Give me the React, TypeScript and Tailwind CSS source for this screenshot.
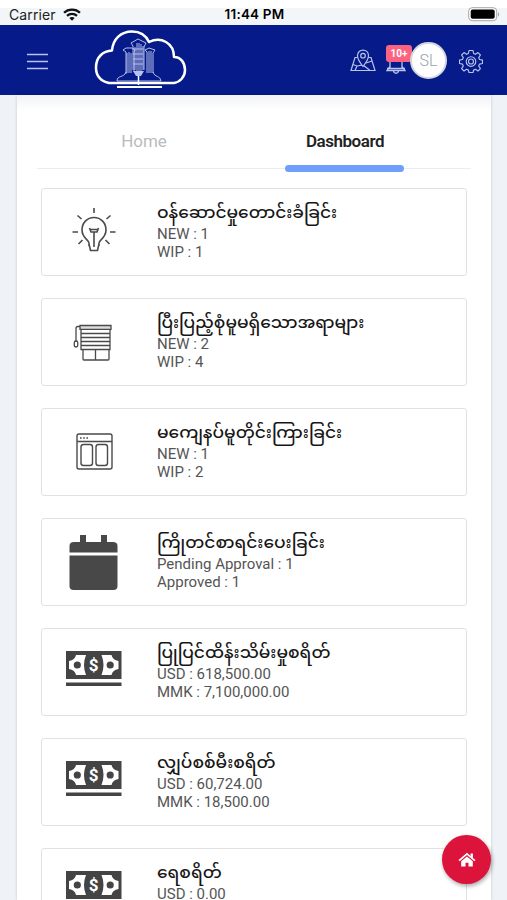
import type { ReactNode } from "react";

type CardItem = {
    title: string;
    // final width of the title
    width: string;
    lines: string[];
    icon: ReactNode;
};

const cards: CardItem[] = [
    { title: "ဝန်ဆောင်မှုတောင်းခံခြင်း", width: "w-[182px]", lines: ["NEW : 1", "WIP : 1"], icon: <BulbIcon /> },
    { title: "ပြီးပြည့်စုံမူမရှိသောအရာများ", width: "w-[205px]", lines: ["NEW : 2", "WIP : 4"], icon: <BlindsIcon /> },
    { title: "မကျေနပ်မူတိုင်းကြားခြင်း", width: "w-[184px]", lines: ["NEW : 1", "WIP : 2"], icon: <ColumnsIcon /> },
    { title: "ကြိုတင်စာရင်းပေးခြင်း", width: "w-[165px]", lines: ["Pending Approval : 1", "Approved : 1"], icon: <CalendarIcon /> },
    { title: "ပြုပြင်ထိန်းသိမ်းမှုစရိတ်", width: "w-[172px]", lines: ["USD : 618,500.00", "MMK : 7,100,000.00"], icon: <MoneyIcon /> },
    { title: "လျှပ်စစ်မီးစရိတ်", width: "w-[118px]", lines: ["USD : 60,724.00", "MMK : 18,500.00"], icon: <MoneyIcon /> },
    { title: "ရေစရိတ်", width: "w-[66px]", lines: ["USD : 0.00", "MMK : 0.00"], icon: <MoneyIcon /> },
];

export default function App() {
    return (
        <div className="relative w-[507px] h-[900px] overflow-hidden bg-[#eff3f8] font-[Roboto,sans-serif] flex flex-col">
            <StatusBar />
            <Header />

            <main className="mx-[17px] w-[474px] flex-1 min-h-0 bg-white shadow-[0_0_3px_rgba(0,0,0,0.18)] overflow-hidden">
                <div className="h-[15px] -mb-[15px] bg-gradient-to-b from-[#f1f2f7] to-white" />
                <nav className="mx-5 h-[74px] border-b border-[#ebedef] flex font-[Exo_2,Exo,Roboto,sans-serif] text-[17px]">
                    <div className="relative w-[214px] pt-[34px] text-center leading-6 text-[#b8bcc0]">Home</div>
                    <div className="relative w-[188px] pt-[34px] text-center leading-6 font-semibold tracking-[-0.45px] text-[#222]">
                        Dashboard
                        <span className="absolute left-[34px] top-[70px] h-[7px] w-[119px] rounded-full bg-[#6f9ffa]" />
                    </div>
                </nav>

                <div className="ml-6 mt-[19px] flex w-[426px] flex-col gap-[22px]">
                    {cards.map((card) => (
                        <Card key={card.title} {...card} />
                    ))}
                </div>
            </main>

            {/* Floating home button */}
            <button className="absolute left-[442px] top-[835px] flex h-[49px] w-[49px] items-center justify-center rounded-full bg-[#dc143c] shadow-[1px_2px_4px_rgba(0,0,0,0.35)]">
                <svg width="18" height="16" viewBox="0 0 18 16" fill="#fff">
                    <path d="M9 .8 0.5 8.1l1.1 1.2L9 3l7.400 6.300 1.100-1.200-2.600-2.200V1.500h-2.300v2.400z" />
                    <path d="M9 4.400 3.200 9.300v5.200h4.300v-3.800h3v3.800h4.300V9.300z" />
                </svg>
            </button>
        </div>
    );
}

function StatusBar() {
    return (
        <div className="h-[25px] shrink-0 border-t-8 border-white bg-[#f2f6f8] font-[Inter,sans-serif] text-black">
            <div className="-mt-[3px] flex h-[18px] items-center justify-between pl-[9px] pr-[7px]">
                <div className="flex w-[100px] items-center gap-[7px]">
                    <span className="text-[14px] tracking-[0.1px] text-[#222]">Carrier</span>
                    <svg width="18" height="13" viewBox="0 0 18 13" fill="none" stroke="#111" strokeWidth="2.200">
                        <path d="M1 4.700C5.500.5 12.500.5 17 4.700" />
                        <path d="M4 7.900c2.800-2.700 7.200-2.700 10 0" />
                        <path d="M9 12.800 6.300 10c1.500-1.400 3.900-1.400 5.400 0z" fill="#111" stroke="none" />
                    </svg>
                </div>
                <span className="text-[13.500px] font-semibold tracking-[0.2px]">11:44 PM</span>
                <div className="flex w-[100px] justify-end">
                    <svg width="32" height="15" viewBox="0 0 32 15">
                        <rect x=".7" y=".7" width="28" height="13" rx="3.500" fill="#fff" stroke="#a4a6a8" />
                        <rect x="2.700" y="2.600" width="24" height="9.200" rx="2" fill="#000" />
                        <path d="M30 5v4.600c1.600-.8 1.600-3.800 0-4.600z" fill="#a4a6a8" />
                    </svg>
                </div>
            </div>
        </div>
    );
}

function Header() {
    return (
        <header className="flex h-[70px] shrink-0 items-center bg-[#061a89]">
            <svg className="ml-[27px] mt-[3px]" width="21" height="18" viewBox="0 0 21 18" stroke="#b9c3ed" strokeWidth="1.300">
                <path d="M0 1.500h21M0 8.500h21M0 15.500h21" />
            </svg>
            <svg className="ml-[46px]" width="94" height="62" viewBox="0 0 94 62" fill="none">
                <path
                    d="M15 54C6 52 2 46 2 38.500 2 28 9 22 18 21.500 19 10 27 2.500 38 2.500c8 0 14 4 17 10.500 12-6 25 1 25 15 7 0 11 6 11 13 0 7-5 12-11 13z"
                    stroke="#fff"
                    strokeWidth="2.500"
                    strokeLinejoin="round"
                />
                <path d="M23 58h45" stroke="#fff" strokeWidth="2.200" />
                <g stroke="#b6c0ea" strokeWidth="1">
                    <path d="M32 45V23l-3-2 3-2h6l3 2-1 2v20M33 24v20M35 23v21M37 24v20" />
                    <path d="M39 41V17l-2-3 7-4 8 4-2 4v23M41 18v23M43 14v28M45 14v28M47 15v27M49 17v24" />
                    <path d="M53 44V23l-2-2 4-2 6 2-2 3v20M55 22v22M57 22v22M39 20h10M39 25h10M39 30h10M39 35h10" />
                    <path d="M32 43c-2 6-9 3-9 9h21M59 43c2 6 7 3 8 9H44" />
                </g>
                <path d="M39 42h11l-3 5h-5z" fill="#b6c0ea" />
                <path d="M44.500 47v9" stroke="#fff" strokeWidth="1.500" />
            </svg>

            {/* Map */}
            <svg className="ml-[162px] mt-px" width="26" height="23" viewBox="0 0 26 23" fill="none" stroke="#b9c3ed" strokeWidth="1.200">
                <path d="M7.500 8.500H5L1 21.500h24L21 8.500h-2.500M3 15.500l4 1.500-2 4.500M7 17l6-1 7 5.500M16 14l6-2" />
                <path d="M13 17.500C9 12.500 7.500 10 7.500 6.800c0-7.600 11-7.600 11 0 0 3.200-1.500 5.700-5.500 10.700z" fill="#061a89" />
                <circle cx="13" cy="6.700" r="2.300" />
            </svg>

            {/* Notifications */}
            <div className="relative ml-[10px] mt-[3px] h-[26px] w-[20px]">
                <svg width="20" height="26" viewBox="0 0 20 26" fill="none" stroke="#b9c3ed" strokeWidth="1.300">
                    <path d="M4 8v11M16 8v11M4 17.500l-3 4h18l-3-4M1 19.500h18M7.500 22c.5 3 4.500 3 5 0" />
                </svg>
                <span className="absolute left-0 top-[-4px] flex h-[17px] w-[26px] items-center justify-center rounded-[3px] bg-[#fb6380] font-[Exo_2,Exo,Roboto,sans-serif] text-[10px] font-bold text-white">
                    10+
                </span>
            </div>

            <div className="relative ml-[4px] mt-px flex h-[37px] w-[37px] items-center justify-center rounded-full border-2 border-[#d3d7df] bg-white font-[Exo_2,Exo,Roboto,sans-serif] text-[16px] font-light text-[#9ba2a8]">
                SL
            </div>

            <svg className="ml-[12px] mt-px" width="24" height="24" viewBox="0 0 24 24" fill="none" stroke="#b9c3ed" strokeWidth="1.150">
                <path
                    d="M10 1.500h4l.6 3 1.800.8L19 3.600 21.400 6l-1.700 2.600.8 1.900 3 .6v3.400l-3 .6-.8 1.900 1.700 2.600-2.400 2.400-2.600-1.700-1.800.8-.6 2.400h-4l-.6-2.400-1.800-.8L5 22l-2.400-2.400L4.300 17l-.8-1.900-3-.6v-3.400l3-.6.8-1.900L2.600 6 5 3.600l2.600 1.700 1.800-.8z"
                    strokeLinejoin="round"
                />
                <circle cx="12" cy="12.500" r="4.800" />
                <circle cx="12" cy="12.500" r="2.500" />
            </svg>
        </header>
    );
}

function Card({ title, width, lines, icon }: CardItem) {
    return (
        <div className="flex h-[88px] shrink-0 rounded-[3px] border border-[#dfe2e4] bg-white">
            <div className="flex w-[115px] items-center pl-[24px]">{icon}</div>
            <div className="pt-[14px]">
                <h3 className={`${width} h-[22px] whitespace-nowrap font-[Noto_Sans_Myanmar,Padauk,Myanmar_Text,Noto_Sans,sans-serif] text-[17px] font-medium leading-[22px] text-[#161616]`}>
                    {title}
                </h3>
                {lines.map((line) => (
                    <p key={line} className="whitespace-nowrap text-[15px] leading-[18px] text-[#555]">
                        {line}
                    </p>
                ))}
            </div>
        </div>
    );
}

function BulbIcon() {
    return (
        <svg width="56" height="50" viewBox="0 0 56 50" fill="none" stroke="#4a4a4a" strokeWidth="1.600">
            <path d="M23 39v-3c0-3-7-5-7-13 0-7 5-12.500 12-12.500S40 16 40 23c0 8-7 10-7 13v3M23 37l1.500 6.500h7L33 37M28 25v15M23.500 21l1.500 4h6l1.500-4M24 22.500h8" />
            <path d="M28 1v5M11.500 8.500l4 3.500M44.500 8.500 40.500 12M6.500 25h5.500M44 25h5.500M12.500 37l4-4M43.500 37l-4-4" />
        </svg>
    );
}

function BlindsIcon() {
    return (
        <svg width="56" height="44" viewBox="0 0 56 44" fill="none" stroke="#4a4a4a" strokeWidth="1.300">
            <path d="M14 5.500h31v3.800H14z" fill="#ddd" />
            <path d="M15 9.500v20h29v-20M15 13.500h29M15 17.500h29M15 21.500h29M15 25.500h29M15 29.500h29" />
            <path d="M17 30v9q0 1 1 1h24q1 0 1-1v-9M29.500 30v10M14 6.500h-2q-2 0-2 2v13" />
            <rect x="8.300" y="21" width="3.500" height="6" rx="1.700" />
        </svg>
    );
}

function ColumnsIcon() {
    return (
        <svg width="56" height="44" viewBox="0 0 56 44" fill="none" stroke="#4a4a4a" strokeWidth="1.400">
            <rect x="11" y="4" width="35" height="35" rx="2" />
            <path d="M11 11.500h35" />
            <path d="M14 8h8" strokeDasharray="1.600 1.600" />
            <rect x="15" y="14.500" width="11.500" height="21" rx="2.500" />
            <rect x="30" y="14.500" width="11.500" height="21" rx="2.500" />
        </svg>
    );
}

function CalendarIcon() {
    return (
        <svg width="56" height="56" viewBox="0 0 56 56" fill="#484848">
            <path d="M14 1h6v7h15V1h6v7h6q4.500 0 4.500 4v6.500h-48V12q0-4 4.500-4h6z" />
            <path d="M3.500 21.500h48V52q0 4-4 4h-40q-4 0-4-4z" />
        </svg>
    );
}

function MoneyIcon() {
    return (
        <svg className="-mt-[7px]" width="56" height="36" viewBox="0 0 56 36">
            <path d="M0 0h55.500v28H0zM0 31.500h55.500v3.500H0z" fill="#444" />
            <path d="M10 4h10q-4 10 0 20H10q-1-5-7-6V10q6-1 7-6zM45.500 4h-10q4 10 0 20h10q1-5 7-6V10q-6-1-7-6z" fill="#fff" />
            <circle cx="11.300" cy="14" r="3.600" fill="#444" />
            <circle cx="44.200" cy="14" r="3.600" fill="#444" />
            <text x="27.700" y="20" textAnchor="middle" fontSize="17" fontWeight="700" fontFamily="Roboto, sans-serif" fill="#fff">
                $
            </text>
        </svg>
    );
}
